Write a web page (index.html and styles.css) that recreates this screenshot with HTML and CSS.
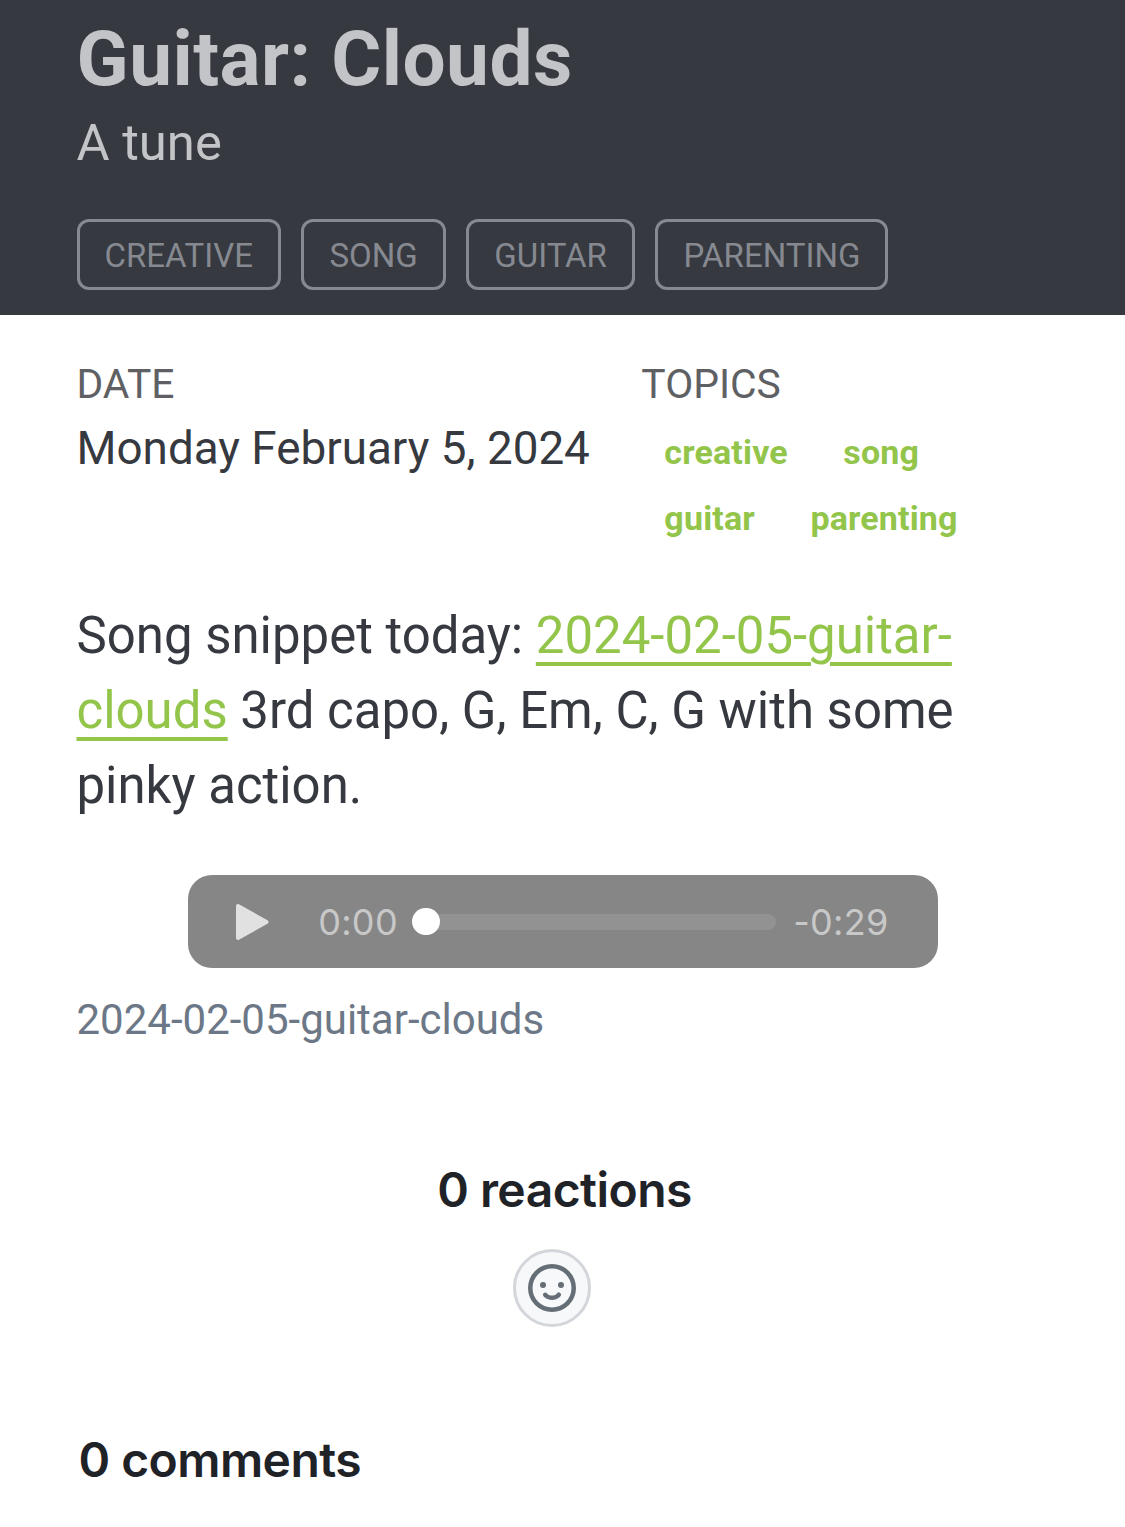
FILE: index.html
```html
<!DOCTYPE html>
<html lang="en">
<head>
<meta charset="utf-8">
<title>Guitar: Clouds</title>
<link rel="stylesheet" href="styles.css">
</head>
<body>
<header class="hero">
  <h1 class="title">Guitar: Clouds</h1>
  <p class="subtitle">A tune</p>
  <ul class="tags">
    <li class="tag">CREATIVE</li>
    <li class="tag">SONG</li>
    <li class="tag">GUITAR</li>
    <li class="tag">PARENTING</li>
  </ul>
</header>
<main class="content">
  <section class="meta">
    <div class="meta-date">
      <h2 class="label">DATE</h2>
      <p class="date">Monday February 5, 2024</p>
    </div>
    <div class="meta-topics">
      <h2 class="label">TOPICS</h2>
      <div class="topics">
        <a class="topic">creative</a>
        <a class="topic">song</a>
        <a class="topic">guitar</a>
        <a class="topic">parenting</a>
      </div>
    </div>
  </section>
  <p class="body-text">Song snippet today: <a class="link">2024-02-05-guitar-clouds</a> 3rd capo, G, Em, C, G with some pinky action.</p>
  <figure class="audio">
    <div class="player">
      <svg class="play" viewBox="0 0 34 38"><path d="M3 3v32L31.500 19z" fill="#e1e1e1" stroke="#e1e1e1" stroke-width="4" stroke-linejoin="round"/></svg>
      <span class="time elapsed">0:00</span>
      <div class="track"><div class="thumb"></div></div>
      <span class="time remaining">-0:29</span>
    </div>
    <figcaption class="caption">2024-02-05-guitar-clouds</figcaption>
  </figure>
  <section class="reactions">
    <h3 class="count">0 reactions</h3>
    <button class="react" aria-label="Add reaction">
      <svg class="smiley" viewBox="0 0 16 16" fill="#656d76"><path d="M8 0a8 8 0 1 1 0 16A8 8 0 0 1 8 0ZM1.500 8a6.500 6.500 0 1 0 13 0 6.500 6.500 0 0 0-13 0Zm3.820 1.636a.75.75 0 0 1 1.038.175l.007.009c.103.118.22.222.35.31.264.178.683.37 1.285.37.602 0 1.020-.192 1.285-.371.13-.088.247-.192.35-.31l.007-.008a.75.75 0 0 1 1.222.87l-.022-.015c.020.013.021.015.021.015v.001l-.001.002-.002.003-.005.007-.014.019a2.066 2.066 0 0 1-.184.213c-.16.166-.338.316-.53.445-.63.418-1.370.638-2.127.629-.946 0-1.652-.308-2.126-.63a3.331 3.331 0 0 1-.715-.657l-.014-.020-.005-.006-.002-.003v-.002h-.001l.613-.432-.614.430a.75.75 0 0 1 .183-1.044ZM12 7a1 1 0 1 1-2 0 1 1 0 0 1 2 0ZM5 8a1 1 0 1 1 0-2 1 1 0 0 1 0 2Z"/></svg>
    </button>
  </section>
  <section class="comments"><h3 class="count">0 comments</h3></section>
</main>
</body>
</html>
```
FILE: styles.css
```css
* { box-sizing: border-box; }
body {
  margin: 0;
  background: #fff;
  color: #363940;
  font-family: Roboto, "Open Sans", sans-serif;
  font-size: 51px;
}
h1, h2, h3, p, ul, figure { margin: 0; padding: 0; font-weight: 400; }
.hero { height: 315px; padding: 13px 76.5px 0; background: #363940; color: #c3c4c7; }
.title { font-size: 76.5px; font-weight: 700; line-height: 92px; letter-spacing: 0.5px; }
.subtitle { font-size: 50.8px; line-height: 76px; }
.tags { display: flex; gap: 20.5px; margin-top: 38px; list-style: none; }
.tag {
  height: 71px;
  padding: 0 25px;
  border: 3px solid #868990;
  border-radius: 12px;
  color: #868990;
  font-size: 33px;
  line-height: 67px;
}
.content { padding: 42px 76.5px 0; }
.meta { display: flex; gap: 51.5px; }
.label { color: #5e6063; font-size: 40.8px; line-height: 54px; }
.date { font-size: 45.8px; line-height: 75px; white-space: nowrap; }
.topics { display: flex; flex-wrap: wrap; column-gap: 9.5px; width: 380px; padding-top: 8px; }
.topic { padding: 0 23px; color: #93c54b; font-size: 34px; font-weight: 700; line-height: 66px; letter-spacing: 0.15px; }
.body-text { margin-top: 47px; font-size: 50.95px; line-height: 75px; }
.link { color: #93c54b; text-decoration: underline; text-decoration-thickness: 4px; text-underline-offset: 9px; }
.player {
  display: flex;
  align-items: center;
  width: 750px;
  height: 93px;
  margin: 52px auto 0;
  padding: 0 49px 0 47px;
  border-radius: 24px;
  background: #868686;
}
.play { width: 34px; height: 38px; margin-right: 49px; }
.time { padding-left: 0.7px; color: #c8c8c8; font: 400 36px/48px Inter, sans-serif; letter-spacing: 0.3px; white-space: nowrap; }
.elapsed { width: 80px; }
.remaining { width: 96px; }
.track { flex: 1; height: 16px; margin: 0 17px 0 14.5px; border-radius: 8px; background: #929292; }
.thumb { width: 27.5px; height: 27.5px; margin-top: -6px; border-radius: 50%; background: #fff; }
.caption { margin-top: 21px; color: #6c7887; font-size: 42px; line-height: 62px; }
.count { color: #1f2328; font: 600 48px/72px Inter, sans-serif; letter-spacing: -0.55px; }
.reactions { margin-top: 103px; }
.reactions .count { padding-left: 4px; text-align: center; }
.react {
  display: grid;
  place-items: center;
  width: 78px;
  height: 78px;
  margin: 23px 0 0 436.5px;
  padding: 0;
  border: 3px solid #d3d6db;
  border-radius: 50%;
  background: #f6f8fa;
}
.smiley { width: 48px; height: 48px; }
.comments { margin-top: 97px; padding-left: 2px; }
```
